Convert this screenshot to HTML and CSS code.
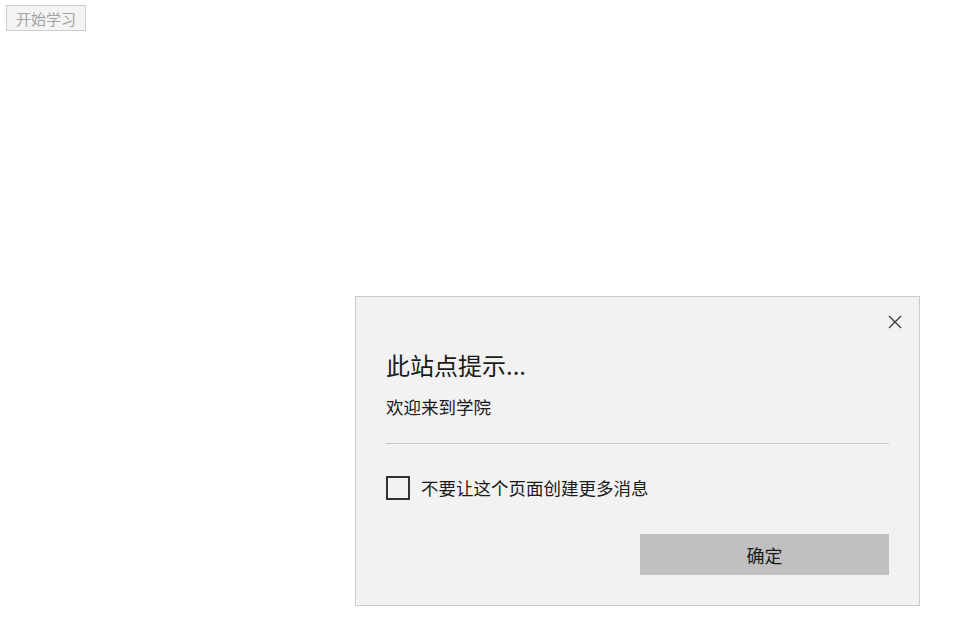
FILE: index.html
```html
<!DOCTYPE html>
<html lang="zh-CN">
<head>
  <meta charset="UTF-8">
  <title>开始学习</title>
  <link rel="stylesheet" href="styles.css">
</head>
<body>
  <button class="start-btn" disabled>开始学习</button>

  <!-- 站点提示对话框 -->
  <div class="dialog">
    <button class="dialog-close" aria-label="关闭">
      <svg width="14" height="14" viewBox="0 0 14 14">
        <path d="M1 1 L13 13 M13 1 L1 13" stroke="#333" stroke-width="1.2" fill="none"/>
      </svg>
    </button>
    <h1 class="dialog-title">此站点提示...</h1>
    <p class="dialog-msg">欢迎来到学院</p>
    <hr class="dialog-sep">
    <label class="dialog-check">
      <span class="check-box"></span>
      <span>不要让这个页面创建更多消息</span>
    </label>
    <div class="dialog-actions">
      <button class="ok-btn">确定</button>
    </div>
  </div>
</body>
</html>
```

FILE: styles.css
```css
body {
  margin: 0;
  min-height: 100vh;
  background-color: #ffffff;
  font-family: "Noto Sans CJK SC", "Noto Sans", sans-serif;
}
.start-btn {
  display: block;
  margin: 5px 6px;
  width: 80px;
  height: 26px;
  padding: 0;
  font-family: "Noto Sans CJK SC", sans-serif;
  font-size: 15px;
  color: #a3a3a3;
  background-color: #f4f4f4;
  border: 1px solid #cdcdcd;
}
.dialog {
  position: absolute;
  left: 355px;
  top: 296px;
  width: 565px;
  height: 310px;
  box-sizing: border-box;
  padding: 0 30px 29px;
  background-color: #f2f2f2;
  border: 1px solid #cccccc;
}
.dialog-close {
  position: absolute;
  top: 18px;
  right: 17px;
  width: 14px;
  height: 14px;
  padding: 0;
  border: none;
  background: none;
  display: flex;
}
.dialog-title {
  margin: 52px 0 0;
  font-size: 24px;
  line-height: 32px;
  font-weight: normal;
  color: #1a1a1a;
}
.dialog-msg {
  margin: 14px 0 0;
  font-size: 17.5px;
  line-height: 24px;
  color: #1a1a1a;
}
.dialog-sep {
  margin: 24px 0 0;
  border: none;
  border-top: 1px solid #c8c8c8;
  height: 0;
}
.dialog-check {
  display: flex;
  align-items: center;
  gap: 11px;
  margin-top: 32px;
  font-size: 17.5px;
  line-height: 24px;
  color: #1a1a1a;
}
.check-box {
  width: 24px;
  height: 24px;
  box-sizing: border-box;
  border: 2px solid #333333;
  background-color: #f2f2f2;
}
.dialog-actions {
  display: flex;
  justify-content: flex-end;
  margin-top: 34px;
}
.ok-btn {
  width: 249px;
  height: 41px;
  border: none;
  background-color: #c0c0c0;
  font-family: "Noto Sans CJK SC", sans-serif;
  font-size: 18px;
  color: #1a1a1a;
}
```
